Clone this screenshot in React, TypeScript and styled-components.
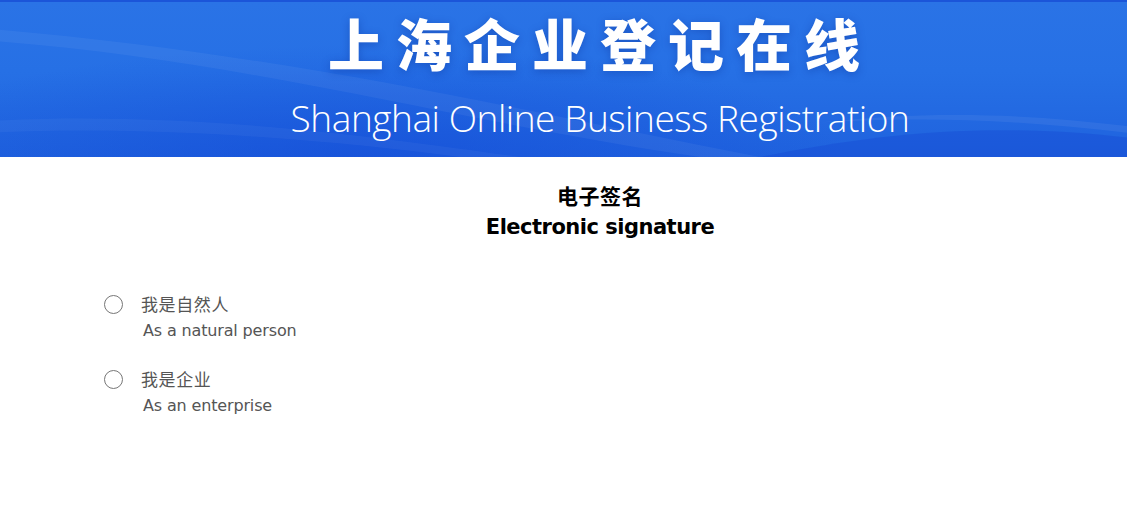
import React from "react";
import styled, { createGlobalStyle } from "styled-components";

const Global = createGlobalStyle`
  html, body { margin: 0; padding: 0; background: #fff; overflow: hidden; }
  body { font-family: "Liberation Sans", "Noto Sans CJK SC", sans-serif; }
`;

const Page = styled.div`
  width: 1200px;
  display: flex;
  flex-direction: column;
`;

const Banner = styled.header`
  position: relative;
  height: 157px;
  overflow: hidden;
  border-top: 2px solid #1b55d9;
  box-sizing: border-box;
  background:
    radial-gradient(ellipse 700px 160px at 30% 100%, rgba(18, 72, 214, 0.55), rgba(18, 72, 214, 0) 70%),
    linear-gradient(180deg, #2a73e6 0%, #2670e5 45%, #1f62de 100%);
  display: flex;
  flex-direction: column;
  align-items: center;
`;

const Waves = styled.svg`
  position: absolute;
  inset: 0;
  width: 100%;
  height: 100%;
  pointer-events: none;
`;

const TitleZh = styled.h1`
  position: relative;
  margin: 3px 0 0 0;
  font-family: "Noto Sans CJK SC", sans-serif;
  font-weight: 900;
  font-size: 56px;
  line-height: 74px;
  letter-spacing: 12px;
  color: #fff;
  text-shadow: 0 2px 8px rgba(10, 40, 140, 0.35);
`;

const TitleEn = styled.div`
  position: relative;
  margin-top: 19px;
  font-family: "Open Sans", sans-serif;
  font-weight: 300;
  font-size: 37px;
  line-height: 40px;
  letter-spacing: -0.45px;
  color: #fff;
`;

const Heading = styled.div`
  margin-top: 24px;
  display: flex;
  flex-direction: column;
  align-items: center;
  color: #000;
  font-weight: 700;
`;

const HeadingZh = styled.div`
  font-family: "Noto Sans CJK SC", sans-serif;
  font-size: 21px;
  line-height: 28px;
  letter-spacing: 0.5px;
`;

const HeadingEn = styled.div`
  margin-top: 2px;
  font-family: "DejaVu Sans", sans-serif;
  font-size: 21px;
  line-height: 32px;
  letter-spacing: -0.5px;
`;

const Options = styled.div`
  margin-top: 48px;
  padding-left: 104px;
  display: flex;
  flex-direction: column;
  gap: 22px;
`;

const Option = styled.label`
  display: grid;
  grid-template-columns: 19px auto;
  column-gap: 18px;
  row-gap: 1px;
  align-items: center;
  cursor: pointer;
`;

const Radio = styled.span`
  width: 19px;
  height: 19px;
  box-sizing: border-box;
  border: 1px solid #767676;
  border-radius: 50%;
  background: #fff;
`;

const OptZh = styled.span`
  font-family: "Noto Sans CJK SC", sans-serif;
  font-size: 17px;
  line-height: 26px;
  letter-spacing: 0.6px;
  color: #555;
`;

const OptEn = styled.span`
  grid-column: 2;
  padding-left: 2px;
  font-family: "DejaVu Sans", sans-serif;
  font-size: 16px;
  line-height: 26px;
  letter-spacing: -0.15px;
  color: #555;
`;

const options = [
  { zh: "我是自然人", en: "As a natural person" },
  { zh: "我是企业", en: "As an enterprise" },
];

export default function App() {
  return (
    <Page>
      <Global />
      <Banner>
        <Waves viewBox="0 0 1200 157" preserveAspectRatio="none">
          <path d="M0 40 C 250 60, 450 120, 700 157 L 760 157 C 520 110, 300 55, 0 28 Z" fill="rgba(255,255,255,0.05)" />
          <path d="M0 120 C 200 110, 400 140, 520 157 L 460 157 C 330 140, 160 125, 0 132 Z" fill="rgba(255,255,255,0.04)" />
          <path d="M760 157 C 900 128, 1030 118, 1200 148 L 1200 157 Z" fill="rgba(20,70,210,0.35)" />
          <path d="M820 122 C 950 114, 1060 122, 1200 142 L 1200 136 C 1060 114, 950 108, 820 122 Z" fill="rgba(255,255,255,0.06)" />
        </Waves>
        <TitleZh>上海企业登记在线</TitleZh>
        <TitleEn>Shanghai Online Business Registration</TitleEn>
      </Banner>
      <Heading>
        <HeadingZh>电子签名</HeadingZh>
        <HeadingEn>Electronic signature</HeadingEn>
      </Heading>
      <Options>
        {options.map((o) => (
          <Option key={o.zh}>
            <Radio />
            <OptZh>{o.zh}</OptZh>
            <OptEn>{o.en}</OptEn>
          </Option>
        ))}
      </Options>
    </Page>
  );
}
